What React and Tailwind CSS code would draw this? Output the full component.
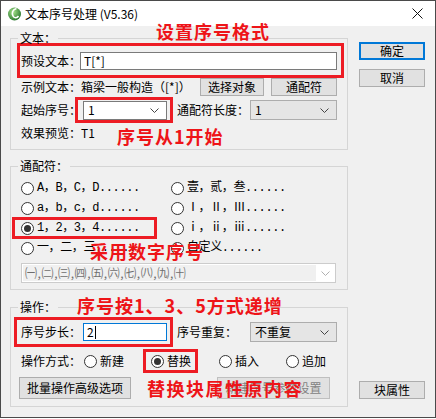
import React from 'react';
import clsx from 'clsx';

const RED = 'border-[#ed1c24]';

function Chevron({ color = '#444' }) {
    return (
        <svg width="9" height="5" viewBox="0 0 9 5">
            <path d="M0.5 0.5 L4.5 4.5 L8.5 0.5" fill="none" stroke={color} strokeWidth="1" />
        </svg>
    );
}

function Select({ value, className, white }) {
    return (
        <div
            className={clsx(
                'shrink-0 flex items-center justify-between pl-[4px] pr-[7px] border',
                white ? 'bg-white border-[#7a7a7a]' : 'bg-[#e5e5e5] border-[#adadad]',
                className
            )}
        >
            <span>{value}</span>
            <Chevron />
        </div>
    );
}

function Button({ children, className, primary, disabled }) {
    return (
        <div
            className={clsx(
                'shrink-0 flex items-center justify-center',
                primary ? 'border-2 border-[#0078d7] bg-[#e1e1e1]' : 'border border-[#adadad] bg-[#e1e1e1]',
                disabled && 'bg-[#cccccc] border-[#bfbfbf] text-[#838383]',
                className
            )}
        >
            {children}
        </div>
    );
}

function Radio({ checked, label, className, mono }) {
    return (
        <div className={clsx('shrink-0 flex items-center', className)}>
            <span className="w-[13px] h-[13px] shrink-0 rounded-full border border-[#333] bg-white flex items-center justify-center">
                {checked && <span className="w-[7px] h-[7px] rounded-full bg-[#333]" />}
            </span>
            <span className={clsx('ml-[3px]', mono && "font-['Liberation_Mono','Noto_Sans_CJK_SC',monospace] tracking-[-0.4px]")}>
                {label}
            </span>
        </div>
    );
}

function Note({ children, className }) {
    // red annotation written over the dialog
    return (
        <div className={clsx("absolute leading-none font-bold text-[#ee1418] font-['Noto_Sans_CJK_SC',sans-serif]", className)}>
            {children}
        </div>
    );
}

export default function App() {
    return (
        <div className="w-[436px] h-[419px] bg-white">
            <div className="relative w-[436px] h-[418px] border border-[#4a4a4a] bg-[#f0f0f0] flex flex-col text-[12px] text-black whitespace-nowrap font-['Noto_Sans_CJK_SC',sans-serif]">
                {/* title bar */}
                <div className="h-[25px] bg-white flex items-center pl-[6px] pr-[12px]">
                    <svg width="15" height="15" viewBox="0 0 15 15">
                        <defs>
                            <radialGradient id="ball" cx="0.4" cy="0.35" r="0.75">
                                <stop offset="0" stopColor="#a6e48a" />
                                <stop offset="1" stopColor="#1c6a24" />
                            </radialGradient>
                        </defs>
                        <circle cx="7.5" cy="8" r="6.5" fill="url(#ball)" />
                        <path d="M9.5 2.5 C5.5 3.5 4.5 7 6 10 C7 12 10 12.5 11.5 10" fill="none" stroke="#fff" strokeWidth="1.6" />
                    </svg>
                    <span className="ml-[3px]">文本序号处理 (V5.36)</span>
                    <svg className="ml-auto" width="11" height="11" viewBox="0 0 11 11">
                        <path d="M0.5 0.5 L10.5 10.5 M10.5 0.5 L0.5 10.5" stroke="#111" strokeWidth="1" />
                    </svg>
                </div>

                <div className="flex flex-1 pl-[9px]">
                    <div className="w-[338px] flex flex-col">
                        {/* 文本 */}
                        <fieldset className="mt-[7px] border border-[#d5d5d5] pb-[6px]">
                            <legend className="ml-[7px] px-[2px] leading-[10px]">文本：</legend>
                            <div className={clsx('ml-[6px] mr-[3px] h-[35px] border-[3px] flex items-center', RED)}>
                                <span className="w-[60px] shrink-0 pl-[1px]">预设文本：</span>
                                <div className="w-[257px] h-[18px] shrink-0 bg-white border border-[#7a7a7a] flex items-center pl-[3px]">T[*]</div>
                            </div>
                            <div className="h-[18px] flex items-center ml-[10px]">
                                <span className="w-[60px] shrink-0">示例文本：</span>
                                <span className="w-[119px] shrink-0">箱梁一般构造（[*]）</span>
                                <Button className="w-[64px] h-[18px]">选择对象</Button>
                                <Button className="w-[66px] h-[18px] ml-[7px]">通配符</Button>
                            </div>
                            <div className="h-[26px] mt-[1px] flex items-center ml-[10px]">
                                <span className="w-[54px] shrink-0">起始序号：</span>
                                <div className={clsx('w-[98px] h-[26px] shrink-0 border-[3px] flex items-center pl-[5px]', RED)}>
                                    <Select white value="1" className="w-[84px] h-[19px]" />
                                </div>
                                <span className="ml-[4px] w-[73px] shrink-0">通配符长度：</span>
                                <Select value="1" className="w-[87px] h-[20px]" />
                            </div>
                            <div className="h-[20px] flex items-center ml-[10px]">
                                <span className="w-[60px] shrink-0">效果预览：</span>
                                <span>T1</span>
                            </div>
                        </fieldset>

                        {/* 通配符 */}
                        <fieldset className="mt-[11px] border border-[#d5d5d5] pb-[6px]">
                            <legend className="ml-[7px] px-[2px] leading-[10px]">通配符：</legend>
                            <div className="grid grid-cols-[150px_1fr] ml-[1px] pt-[7px]">
                                <Radio mono label="A，B，C，D......" className="h-[20px] pl-[9px]" />
                                <Radio mono label="壹，贰，叁......" className="h-[20px] pl-[9px]" />
                                <Radio mono label="a，b，c，d......" className="h-[20px] pl-[9px]" />
                                <Radio mono label="Ⅰ，Ⅱ，Ⅲ......" className="h-[20px] pl-[9px]" />
                                <div className="h-[20px] flex items-center">
                                    <div className={clsx('-my-[1px] h-[22px] w-[145px] border-[3px] pl-[6px] flex items-center', RED)}>
                                        <Radio mono checked label="1，2，3，4......" />
                                    </div>
                                </div>
                                <Radio mono label="ⅰ，ⅱ，ⅲ......" className="h-[20px] pl-[9px]" />
                                <Radio mono label="一，二，三......" className="h-[20px] pl-[9px]" />
                                <Radio mono label="自定义......" className="h-[20px] pl-[9px]" />
                            </div>
                            <div className="mt-[5px] ml-[10px] w-[315px] h-[20px] border border-[#cccccc] bg-white p-[1px] flex">
                                <div className="flex-1 bg-[#f0f0f0] flex items-center pl-[2px] text-[#6d6d6d] tracking-[0.6px]">
                                    ㈠,㈡,㈢,㈣,㈤,㈥,㈦,㈧,㈨,㈩
                                </div>
                                <div className="w-[18px] flex items-center justify-center">
                                    <Chevron color="#b0b0b0" />
                                </div>
                            </div>
                        </fieldset>

                        {/* 操作 */}
                        <fieldset className="mt-[12px] border border-[#d5d5d5] pb-[7px]">
                            <legend className="ml-[7px] px-[2px] leading-[10px]">操作：</legend>
                            <div className="mt-[5px] h-[30px] flex items-center ml-[3px]">
                                <div className={clsx('w-[159px] h-[30px] shrink-0 border-[3px] flex items-center pl-[4px]', RED)}>
                                    <span className="w-[62px] shrink-0">序号步长：</span>
                                    <div className="w-[84px] h-[18px] shrink-0 bg-white border border-[#0078d7] flex items-center pl-[3px]">
                                        2<span className="ml-[1px] w-[1px] h-[13px] bg-black" />
                                    </div>
                                </div>
                                <span className="ml-[4px] w-[73px] shrink-0">序号重复：</span>
                                <Select value="不重复" className="w-[87px] h-[20px]" />
                            </div>
                            <div className="mt-[2px] h-[24px] flex items-center ml-[10px]">
                                <span className="w-[63px] shrink-0">操作方式：</span>
                                <Radio label="新建" className="w-[59px]" />
                                <div className={clsx('w-[55px] h-[24px] shrink-0 border-[3px] flex items-center pl-[5px]', RED)}>
                                    <Radio checked label="替换" />
                                </div>
                                <Radio label="插入" className="ml-[21px] w-[67px]" />
                                <Radio label="追加" />
                            </div>
                            <div className="mt-[4px] flex items-center ml-[8px]">
                                <Button className="w-[112px] h-[22px]">批量操作高级选项</Button>
                                <Button disabled className="ml-[86px] w-[113px] h-[22px]">新建序号参数设置</Button>
                            </div>
                        </fieldset>
                    </div>

                    {/* right buttons */}
                    <div className="ml-[11px] w-[66px] flex flex-col pb-[18px]">
                        <Button primary className="mt-[16px] h-[18px]">确定</Button>
                        <Button className="mt-[9px] h-[18px]">取消</Button>
                        <Button className="mt-auto h-[18px]">块属性</Button>
                    </div>
                </div>

                <Note className="left-[155px] top-[21px] text-[18px] tracking-[1px]">设置序号格式</Note>
                <Note className="left-[116px] top-[126px] text-[18px] tracking-[1px]">序号从1开始</Note>
                <Note className="left-[89px] top-[241px] text-[18px] tracking-[1px]">采用数字序号</Note>
                <Note className="left-[76px] top-[295px] text-[18px] tracking-[1px]">序号按1、3、5方式递增</Note>
                <Note className="left-[146px] top-[378px] text-[18px] tracking-[1.5px]">替换块属性原内容</Note>
            </div>
        </div>
    );
}
